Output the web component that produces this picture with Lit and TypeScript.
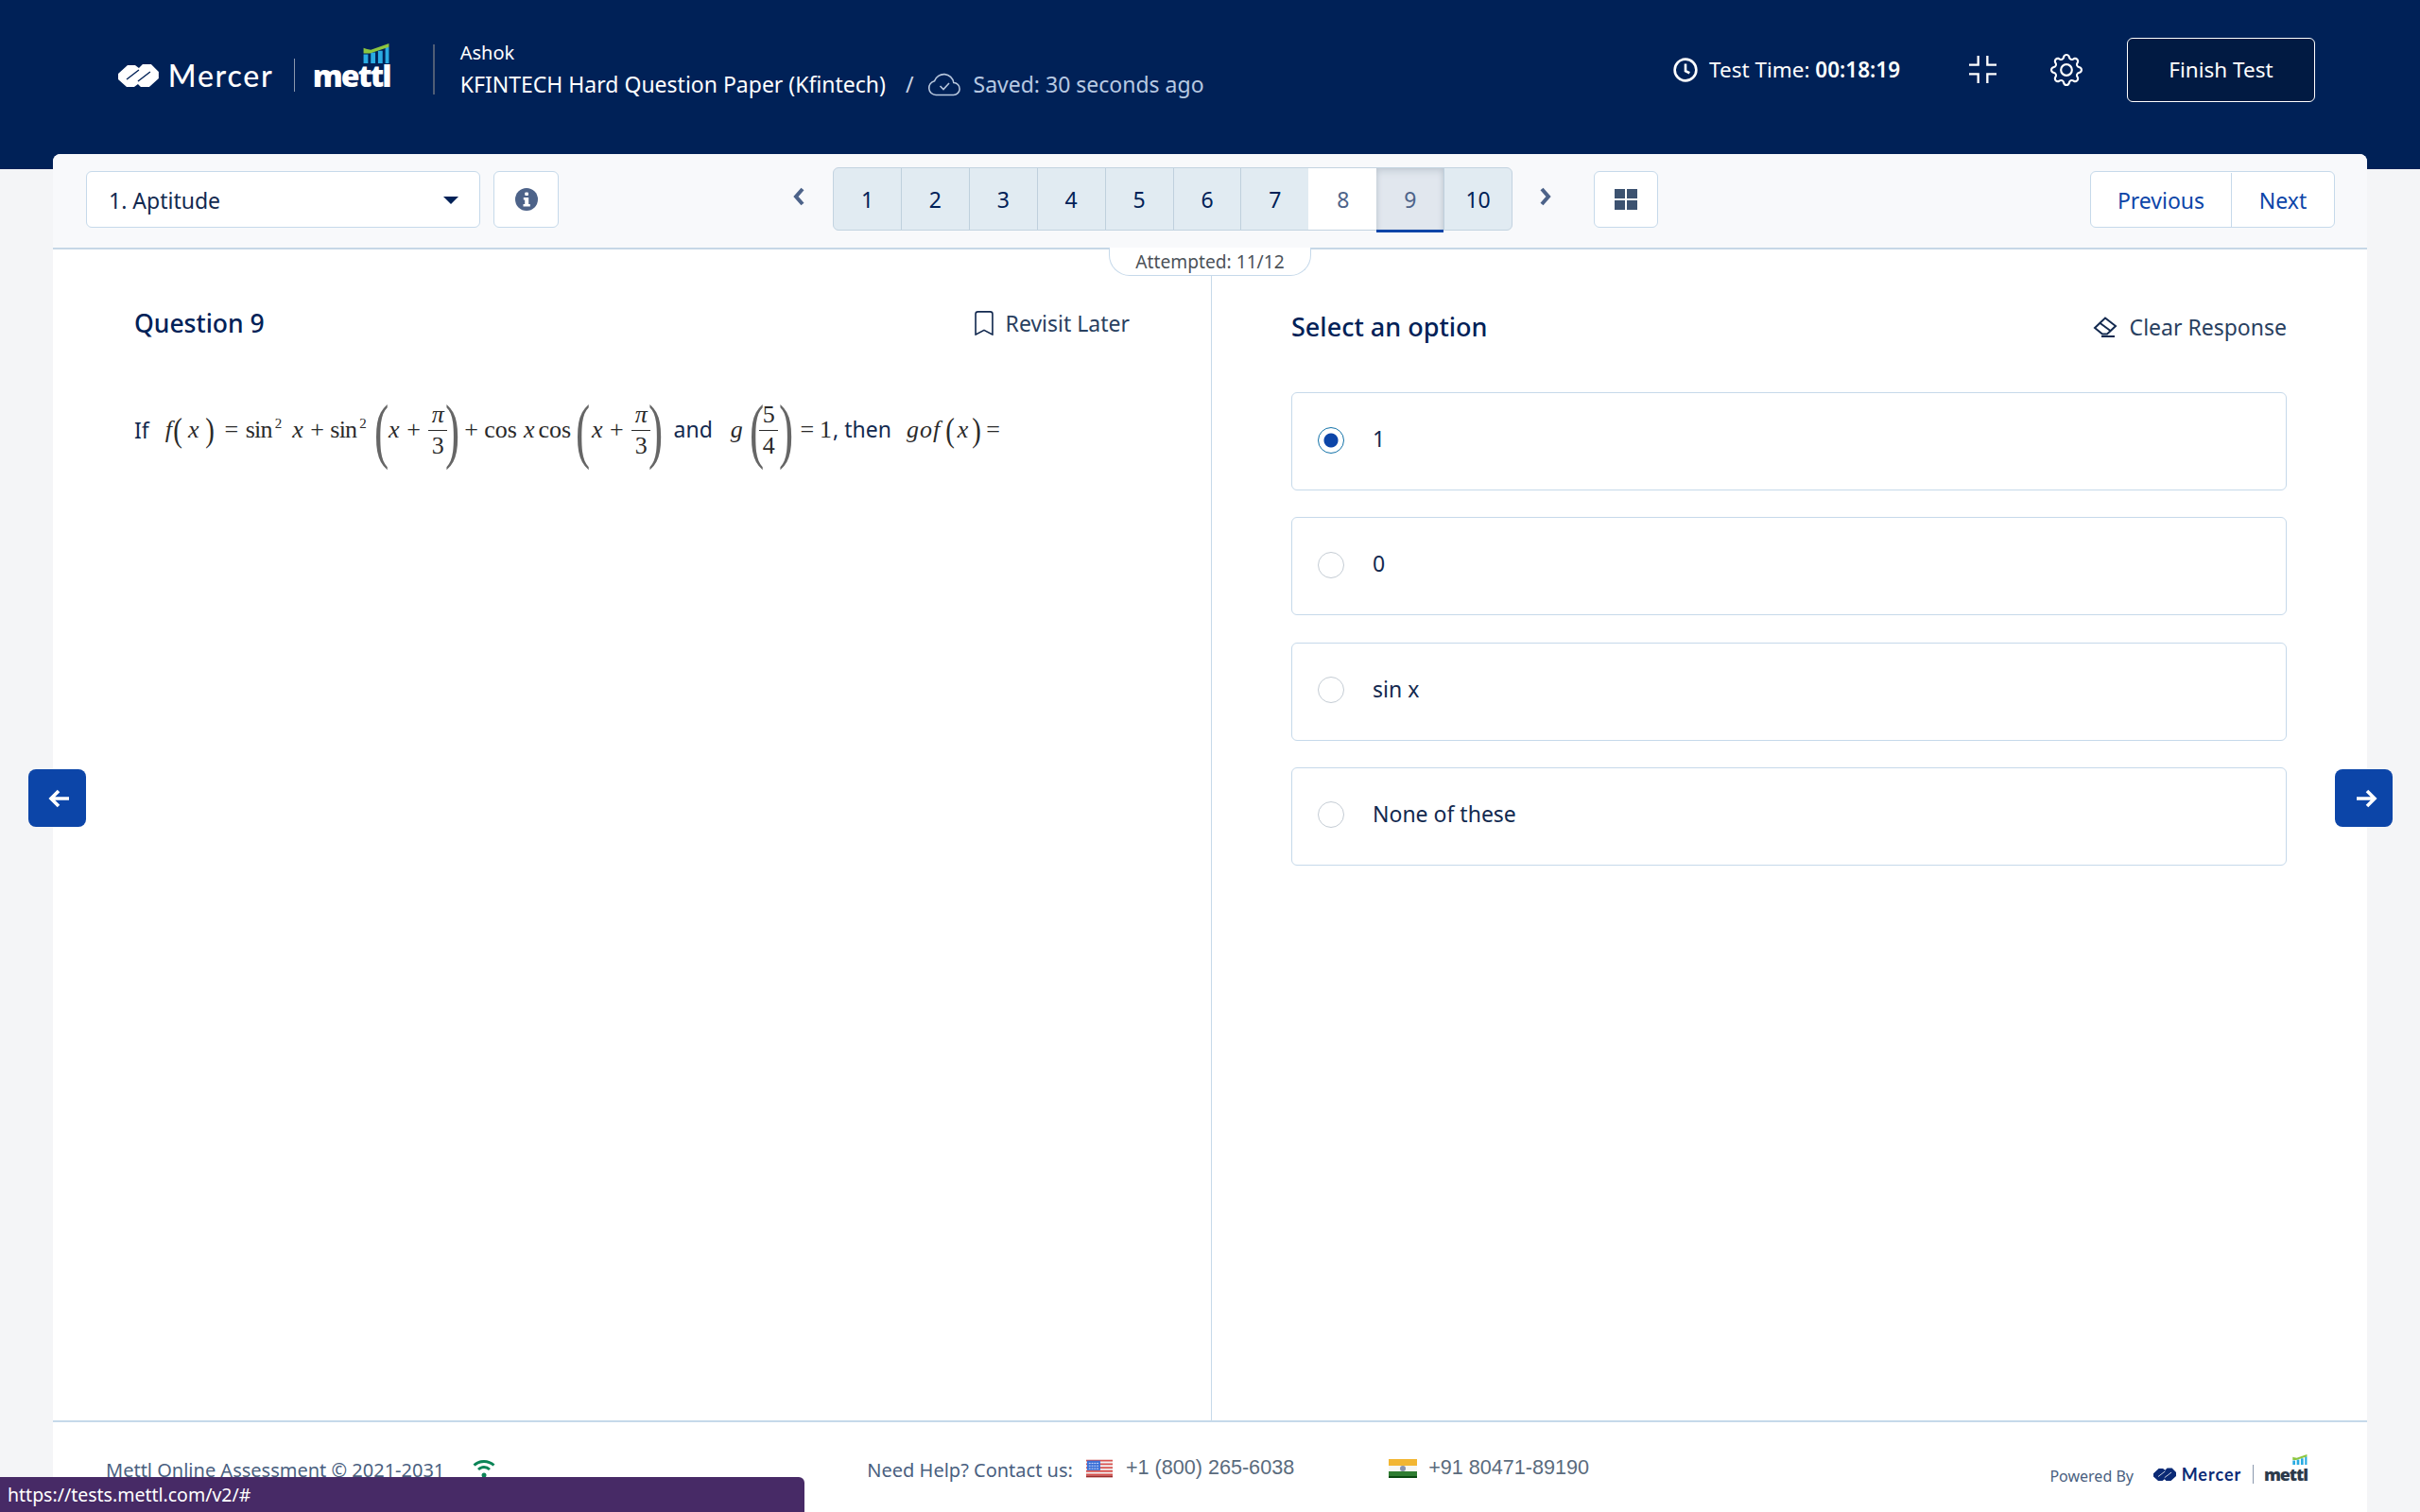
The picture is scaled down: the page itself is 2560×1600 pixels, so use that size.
import { LitElement, css, html, svg, type TemplateResult } from 'lit'
import { customElement } from 'lit/decorators.js'

const GEAR_INNER =
  'M8 4.754a3.246 3.246 0 1 0 0 6.492 3.246 3.246 0 0 0 0-6.492zM5.754 8a2.246 2.246 0 1 1 4.492 0 2.246 2.246 0 0 1-4.492 0z'
const GEAR_OUTER =
  'M9.796 1.343c-.527-1.79-3.065-1.79-3.592 0l-.094.319a.873.873 0 0 1-1.255.52l-.292-.16c-1.64-.892-3.433.902-2.54 2.541l.159.292a.873.873 0 0 1-.52 1.255l-.319.094c-1.79.527-1.79 3.065 0 3.592l.319.094a.873.873 0 0 1 .52 1.255l-.16.292c-.892 1.64.901 3.434 2.541 2.54l.292-.159a.873.873 0 0 1 1.255.52l.094.319c.527 1.79 3.065 1.79 3.592 0l.094-.319a.873.873 0 0 1 1.255-.52l.292.16c1.64.893 3.434-.902 2.54-2.541l-.159-.292a.873.873 0 0 1 .52-1.255l.319-.094c1.79-.527 1.79-3.065 0-3.592l-.319-.094a.873.873 0 0 1-.52-1.255l.16-.292c.893-1.64-.902-3.433-2.541-2.54l-.292.159a.873.873 0 0 1-1.255-.52l-.094-.319zm-2.633.283c.246-.835 1.428-.835 1.674 0l.094.319a1.873 1.873 0 0 0 2.693 1.115l.291-.16c.764-.415 1.6.42 1.184 1.185l-.159.292a1.873 1.873 0 0 0 1.116 2.692l.318.094c.835.246.835 1.428 0 1.674l-.319.094a1.873 1.873 0 0 0-1.115 2.693l.16.291c.415.764-.42 1.6-1.185 1.184l-.291-.159a1.873 1.873 0 0 0-2.693 1.116l-.094.318c-.246.835-1.428.835-1.674 0l-.094-.319a1.873 1.873 0 0 0-2.692-1.115l-.292.16c-.764.415-1.6-.42-1.184-1.185l.159-.291A1.873 1.873 0 0 0 1.945 8.93l-.319-.094c-.835-.246-.835-1.428 0-1.674l.319-.094A1.873 1.873 0 0 0 3.06 4.377l-.16-.292c-.415-.764.42-1.6 1.185-1.184l.292.159a1.873 1.873 0 0 0 2.692-1.115l.094-.319z'
const BOOKMARK =
  'M2 2a2 2 0 0 1 2-2h8a2 2 0 0 1 2 2v13.5a.5.5 0 0 1-.777.416L8 13.101l-5.223 2.815A.5.5 0 0 1 2 15.5V2zm2-1a1 1 0 0 0-1 1v12.566l4.723-2.482a.5.5 0 0 1 .554 0L13 14.566V2a1 1 0 0 0-1-1H4z'

/** Mercer | mettl lockup, sized in em so header and footer share it. */
@customElement('brand-logo')
export class BrandLogo extends LitElement {
  render(): TemplateResult {
    return html`
      <svg class="mark" viewBox="0 0 43 26" aria-hidden="true">
        <path class="mark-fill" d="M0 11 10 2h8l4 3 4-4h9l8 8v7l-10 9h-9l-3-3-4 3H9l-9-8z" />
        <path class="mark-cut" d="M9 17 22 7M21 19 34 9" />
      </svg>
      <span class="mercer">Mercer</span>
      <span class="rule"></span>
      <span class="mettl">
        <svg class="chart" viewBox="0 0 28 22" aria-hidden="true">
          <path fill="#29abe2" d="M0 12h5v10H0zM8 10h5v12H8zM16 8h5v14h-5zM24 4h4v18h-4z" />
          <path fill="#8cc63f" d="M0 5l3 1 5 1L28 0v4L7 11H0z" />
        </svg>
        <span class="mettl-text">mettl</span>
      </span>
    `
  }

  static styles = css`
    :host {
      display: inline-flex;
      align-items: center;
      color: #fff;
      font-size: 32px;
    }
    .mark {
      width: 1.34em;
      height: 0.81em;
      margin-right: 0.31em;
    }
    .mark-fill {
      fill: currentColor;
    }
    .mark-cut {
      fill: none;
      stroke: #002157;
      stroke-width: 1.4;
    }
    :host([dark]) .mark-cut {
      stroke: #fff;
    }
    .mercer {
      font-family: 'Lato', 'Open Sans', sans-serif;
      font-size: 1em;
      line-height: 1;
      font-weight: 500;
      letter-spacing: 0.055em;
    }
    .rule {
      width: 1px;
      height: 1.12em;
      margin: 0 0.6em 0 0.66em;
      background: #8a98ad;
    }
    .mettl {
      position: relative;
      display: inline-block;
    }
    .mettl-text {
      position: relative;
      font-family: 'Open Sans', sans-serif;
      font-size: 1em;
      font-weight: 800;
      line-height: 1;
      letter-spacing: -0.06em;
    }
    .chart {
      position: absolute;
      right: 0.02em;
      top: -0.36em;
      width: 0.875em;
      height: 0.66em;
    }
    :host([dark]) {
      color: #0b2a75;
    }
    :host([dark]) .mercer {
      font-weight: 700;
    }
    :host([dark]) .mettl-text {
      color: #2c3a4b;
    }
  `
}

@customElement('app-root')
export class AppRoot extends LitElement {
  private renderMath(): TemplateResult {
    const frac = (top: string, bottom: string, cls = '') => html`
      <span class="frac"><span class=${cls}>${top}</span><i class="bar"></i><span>${bottom}</span></span>
    `
    return html`
      <div class="math" aria-label="formula">
        <span class="t">If</span>
        <span class="m i f1">f</span>
        <span class="m sp">(</span>
        <span class="m i x1">x</span>
        <span class="m sp c1">)</span>
        <span class="m eq">=</span>
        <span class="m nr g1">sin</span>
        <sup class="m sq wide">2</sup>
        <span class="m i">x</span>
        <span class="m op">+</span>
        <span class="m nr">sin</span>
        <sup class="m sq narrow">2</sup>
        <span class="m lp o">(</span>
        <span class="m i">x</span>
        <span class="m op">+</span>
        ${frac('π', '3', 'i')}
        <span class="m lp c">)</span>
        <span class="m op">+</span>
        <span class="m">cos</span>
        <span class="m i g7">x</span>
        <span class="m g4">cos</span>
        <span class="m lp o">(</span>
        <span class="m i g1">x</span>
        <span class="m op">+</span>
        ${frac('π', '3', 'i')}
        <span class="m lp c">)</span>
        <span class="t and">and</span>
        <span class="m i g-l">g</span>
        <span class="m lp o of">(</span>
        ${frac('5', '4')}
        <span class="m lp c c3">)</span>
        <span class="m eq">=</span>
        <span class="m">1</span>
        <span class="t then">, then</span>
        <span class="m i gof">gof</span>
        <span class="m sp g4">(</span>
        <span class="m i g1">x</span>
        <span class="m sp c2">)</span>
        <span class="m eq last">=</span>
      </div>
    `
  }

  private renderPager(): TemplateResult {
    const pages = [1, 2, 3, 4, 5, 6, 7, 8, 9, 10]
    return html`
      <div class="pager">
        ${pages.map(
          (n) => html`<span class="page ${n === 8 ? 'open' : ''} ${n === 9 ? 'current' : ''}">${n}</span>`,
        )}
      </div>
    `
  }

  render(): TemplateResult {
    const options = ['1', '0', 'sin x', 'None of these']
    return html`
      <header class="top">
        <brand-logo class="head-logo"></brand-logo>
        <span class="head-rule"></span>
        <div class="title">
          <div class="user">Ashok</div>
          <div class="paper">
            <span>KFINTECH Hard Question Paper (Kfintech)</span>
            <span class="slash">/</span>
            <svg class="cloud" viewBox="0 0 36 26" fill="none" stroke="#b7c7dd" stroke-width="1.6">
              <path d="M9 24.500a7.500 7.500 0 0 1-1.500-14.800 10.500 10.500 0 0 1 20.300 1.800A6.500 6.500 0 0 1 27.500 24.500z" />
              <path d="m13.500 15 3.500 3.500 6-6.500" />
            </svg>
            <span class="saved">Saved: 30 seconds ago</span>
          </div>
        </div>
        <div class="timer">
          <svg class="clock" viewBox="0 0 24 24" fill="none" stroke="#fff" stroke-width="2.400">
            <circle cx="12" cy="12" r="10.500" />
            <path d="M12 6v7l4 2" />
          </svg>
          <span>Test Time: <b>00:18:19</b></span>
        </div>
        <svg class="compress" viewBox="0 0 30 30" fill="none" stroke="#fff" stroke-width="2.400">
          <path d="M10 0v10H0M20 0v10h10M0 20h10v10M30 20H20v10" />
        </svg>
        <svg class="gear" viewBox="0 0 16 16" fill="#fff">
          <path d=${GEAR_INNER} />
          <path d=${GEAR_OUTER} />
        </svg>
        <button class="finish">Finish Test</button>
      </header>

      <section class="card">
        <div class="toolbar">
          <div class="select">
            <span>1. Aptitude</span>
            <i class="caret"></i>
          </div>
          <div class="tool info">
            <svg viewBox="0 0 24 24">
              <circle cx="12" cy="12" r="12" fill="#4d6389" />
              <rect x="10.200" y="4.500" width="3.800" height="3.600" rx="1" fill="#fff" />
              <path fill="#fff" d="M8.800 10h5.400v7h1.600v2.500H8.500V17h1.700v-4.500H8.800z" />
            </svg>
          </div>
          <svg class="chev prev" viewBox="0 0 14 20">
            <path d="M11 2 4 10l7 8" fill="none" stroke="#4d6389" stroke-width="4" />
          </svg>
          ${this.renderPager()}
          <svg class="chev next" viewBox="0 0 14 20">
            <path d="m3 2 7 8-7 8" fill="none" stroke="#4d6389" stroke-width="4" />
          </svg>
          <div class="tool grid-btn">
            <svg viewBox="0 0 24 22" fill="#3c5270">
              <rect width="11" height="10" />
              <rect x="13" width="11" height="10" />
              <rect y="12" width="11" height="10" />
              <rect x="13" y="12" width="11" height="10" />
            </svg>
          </div>
          <div class="prev-next">
            <span>Previous</span>
            <span>Next</span>
          </div>
          <div class="attempted">Attempted: 11/12</div>
        </div>

        <div class="main">
          <div class="question">
            <div class="row">
              <h2>Question 9</h2>
              <span class="act">
                <svg class="bookmark" viewBox="0 0 16 16" fill="#12294f"><path d=${BOOKMARK} /></svg>
                Revisit Later
              </span>
            </div>
            ${this.renderMath()}
          </div>
          <div class="answers">
            <div class="row">
              <h2 class="pick">Select an option</h2>
              <span class="act clear">
                <svg class="eraser" viewBox="0 0 26 22" fill="none" stroke="#12294f" stroke-width="2">
                  <path d="M13 1.500 24 10 15 18.500H10L2 12z" />
                  <path d="M7 6.500 18.500 15" />
                  <path d="M9 21h14" />
                </svg>
                Clear Response
              </span>
            </div>
            <div class="options">
              ${options.map(
                (o, i) => html`
                  <div class="option">
                    <span class="radio ${i === 0 ? 'on' : ''}"></span>
                    <span class="label">${o}</span>
                  </div>
                `,
              )}
            </div>
          </div>
        </div>

        <footer class="foot">
          <span class="copy">Mettl Online Assessment © 2021-2031</span>
          <svg class="wifi" viewBox="0 0 24 20" fill="none" stroke="#0b8457" stroke-width="3">
            <path d="M1.500 6.500C7.500 1 16.500 1 22.500 6.500M6 11c3.600-3.200 8.400-3.200 12 0" />
            <circle cx="12" cy="17" r="2.500" fill="#0b8457" stroke="none" />
          </svg>
          <span class="help">Need Help? Contact us:</span>
          ${this.flagUs()}
          <span class="phone">+1 (800) 265-6038</span>
          ${this.flagIn()}
          <span class="phone">+91 80471-89190</span>
          <span class="powered">Powered By</span>
          <brand-logo class="foot-logo" dark></brand-logo>
        </footer>
      </section>

      <button class="side left" aria-label="Previous question">
        <svg viewBox="0 0 24 24" fill="none" stroke="#fff" stroke-width="3.600">
          <path d="M22 12H4M11 4l-8 8 8 8" />
        </svg>
      </button>
      <button class="side right" aria-label="Next question">
        <svg viewBox="0 0 24 24" fill="none" stroke="#fff" stroke-width="3.600">
          <path d="M2 12h18M13 4l8 8-8 8" />
        </svg>
      </button>
      <div class="status">https://tests.mettl.com/v2/#</div>
    `
  }

  private flagUs() {
    return html`<svg class="flag" viewBox="0 0 30 20">
      ${svg`
        <rect width="30" height="20" fill="#f2f2f2" />
        <path d="M0 1h30M0 5h30M0 9h30M0 13h30M0 17h30" stroke="#d9534f" stroke-width="2" />
        <rect x="1" y="1" width="15" height="11" fill="#3b6fd6" />
        <path d="M3 4h11M3 7h11M3 10h11" stroke="#dfe8ff" stroke-width="1" stroke-dasharray="2 1" />
        <rect y="18" width="30" height="2" fill="#9c2b2b" />
      `}
    </svg>`
  }

  private flagIn() {
    return html`<svg class="flag flag-in" viewBox="0 0 30 20">
      ${svg`
        <rect width="30" height="7" fill="#f2b632" />
        <rect y="7" width="30" height="6" fill="#f7f7f2" />
        <rect y="13" width="30" height="7" fill="#2f7d32" />
        <rect y="18" width="30" height="2" fill="#0b4a12" />
        <circle cx="15" cy="10" r="3" fill="#8a94ad" />
      `}
    </svg>`
  }

  static styles = css`
    :host {
      display: flex;
      flex-direction: column;
      position: relative;
      width: 2560px;
      height: 1600px;
      overflow: hidden;
      background: #f4f5f7;
      color: #12294f;
      font-family: 'Noto Sans', sans-serif;
      font-size: 23px;
    }
    .top {
      flex: none;
      display: flex;
      align-items: center;
      box-sizing: border-box;
      height: 179px;
      padding: 0 111px 32px 125px;
      background: #002157;
      color: #fff;
    }
    .head-logo {
      margin-top: 12px;
    }
    .head-rule {
      width: 2px;
      height: 53px;
      margin: 0 27px 0 45px;
      background: #4f5d75;
    }
    .user {
      margin-top: 3px;
      font-size: 20px;
      line-height: 28px;
    }
    .paper {
      display: flex;
      align-items: center;
      line-height: 38px;
    }
    .slash {
      margin: 0 14px 0 21px;
      color: #c9d4e4;
    }
    .cloud {
      width: 36px;
      height: 26px;
      margin-right: 13px;
    }
    .saved {
      color: #b7c9e2;
    }
    .timer {
      display: flex;
      align-items: center;
      margin-left: auto;
      gap: 12px;
      font-size: 22.500px;
    }
    .timer b {
      font-weight: 600;
    }
    .clock {
      width: 26px;
      height: 26px;
    }
    .compress {
      width: 29px;
      height: 29px;
      margin-left: 73px;
    }
    .gear {
      width: 34px;
      height: 34px;
      margin-left: 57px;
    }
    .finish {
      width: 199px;
      height: 68px;
      margin-left: 47px;
      border: 1px solid #fff;
      border-radius: 6px;
      background: #011a42;
      color: #fff;
      font: inherit;
      font-size: 22.500px;
    }
    .card {
      flex: 1;
      min-height: 0;
      display: flex;
      flex-direction: column;
      margin: -16px 56px 0;
      border-radius: 8px 8px 0 0;
      background: #fff;
    }
    .toolbar {
      position: relative;
      flex: none;
      display: flex;
      align-items: center;
      box-sizing: border-box;
      height: 101px;
      padding: 0 34px 3px 35px;
      border-bottom: 2px solid #c6d7e6;
      border-radius: 8px 8px 0 0;
      background: #f8f9fb;
    }
    .select {
      box-sizing: border-box;
      width: 417px;
      height: 60px;
      display: flex;
      align-items: center;
      justify-content: space-between;
      padding: 2px 22px 0 23px;
      border: 1px solid #c6d9ea;
      border-radius: 6px;
      background: #fff;
    }
    .caret {
      width: 0;
      height: 0;
      border-left: 8px solid transparent;
      border-right: 8px solid transparent;
      border-top: 8px solid #002157;
    }
    .tool {
      box-sizing: border-box;
      display: flex;
      align-items: center;
      justify-content: center;
      height: 60px;
      border: 1px solid #c6d9ea;
      border-radius: 6px;
      background: #fff;
    }
    .info {
      width: 69px;
      margin-left: 14px;
    }
    .info svg {
      width: 24px;
      height: 24px;
    }
    .chev {
      width: 14px;
      height: 20px;
      margin-bottom: 6px;
    }
    .prev {
      margin-left: 247px;
      margin-right: 29px;
    }
    .next {
      margin-left: 28px;
    }
    .grid-btn {
      width: 68px;
      margin-left: 44px;
    }
    .grid-btn svg {
      width: 24px;
      height: 22px;
    }
    .pager {
      display: flex;
      box-sizing: border-box;
      width: 719px;
      height: 67px;
      margin-bottom: 1px;
      border: 1px solid #c3d3e0;
      border-radius: 6px;
      background: #e1ebf2;
    }
    .page {
      position: relative;
      flex: 1;
      display: flex;
      align-items: center;
      justify-content: center;
      border-left: 1px solid #bfd0dd;
      color: #002157;
    }
    .page:first-child {
      border-left: 0;
    }
    .page.open {
      background: #fff;
      color: #4d6389;
      border-left-color: #fff;
    }
    .page.current {
      background: #e1e7ee;
      color: #4d6389;
      border-left: 0;
      box-shadow: inset 0 6px 8px -4px #bcc5cf, inset 5px 0 6px -5px #bcc5cf, inset -5px 0 6px -5px #bcc5cf;
    }
    .page.current::after {
      content: '';
      position: absolute;
      left: 0;
      right: 0;
      bottom: -3px;
      height: 3px;
      background: #0c45a8;
    }
    .prev-next {
      box-sizing: border-box;
      display: flex;
      height: 60px;
      width: 259px;
      margin-left: auto;
      padding-top: 1px;
      border: 1px solid #c6d9ea;
      border-radius: 6px;
      background: #fff;
      color: #0c45a8;
    }
    .prev-next span {
      display: flex;
      align-items: center;
      justify-content: center;
    }
    .prev-next span:first-child {
      width: 148px;
      border-right: 1px solid #c6d9ea;
    }
    .prev-next span:last-child {
      flex: 1;
    }
    .attempted {
      position: absolute;
      z-index: 1;
      left: 1117px;
      top: 99px;
      box-sizing: border-box;
      width: 214px;
      height: 30px;
      display: flex;
      align-items: center;
      justify-content: center;
      border: 1px solid #c6d9ea;
      border-top: 0;
      border-radius: 0 0 22px 22px;
      background: #fff;
      color: #4c5259;
      font-size: 19.200px;
    }
    .main {
      flex: 1;
      min-height: 0;
      display: flex;
    }
    .question {
      box-sizing: border-box;
      width: 1226px;
      padding: 60px 86px 0;
      border-right: 1px solid #c6d9ea;
    }
    .answers {
      flex: 1;
      padding: 63px 85px 0 84px;
    }
    .row {
      display: flex;
      align-items: center;
      justify-content: space-between;
      height: 36px;
    }
    h2 {
      margin: 0;
      font-size: 26.500px;
      font-weight: 500;
      color: #002157;
    }
    .pick {
      font-size: 27px;
    }
    .act {
      display: flex;
      align-items: center;
      gap: 13px;
      color: #29405f;
    }
    .clear {
      margin-top: 2px;
    }
    .bookmark {
      width: 26px;
      height: 26px;
      margin-right: -3px;
    }
    .eraser {
      width: 26px;
      height: 22px;
    }
    .math {
      display: flex;
      align-items: center;
      height: 72px;
      margin-top: 59px;
      color: #2a2a2a;
      font-family: 'Liberation Serif', serif;
      font-size: 26px;
      white-space: nowrap;
    }
    .t {
      font-family: 'Noto Sans', sans-serif;
      font-size: 23px;
      color: #12294f;
    }
    .m {
      line-height: 1;
    }
    .i {
      font-style: italic;
    }
    .nr {
      letter-spacing: -0.800px;
    }
    .f1 {
      margin-left: 17px;
    }
    .x1 {
      margin-left: 5px;
    }
    .c1 {
      margin-left: 5px;
    }
    .c2 {
      margin-left: 3px;
    }
    .sp {
      font-size: 36px;
      font-weight: 400;
      transform: scaleX(0.8);
    }
    .eq {
      margin: 0 6px 0 10px;
    }
    .eq.last {
      margin-left: 4px;
    }
    .sq {
      margin: -14px 8px 0 3px;
      font-size: 15px;
    }
    .sq.wide {
      margin-right: 11px;
    }
    .sq.narrow {
      margin-right: 3px;
    }
    .op {
      margin: 0 6.500px 0 7.500px;
    }
    .lp {
      font-size: 76px;
      line-height: 72px;
      color: #666;
      transform: scaleX(0.6);
    }
    .lp.o {
      margin-right: -5px;
    }
    .lp.o.of {
      margin: 0 -12px 0 2px;
    }
    .lp.c {
      margin: 0 -8px 0 -7px;
    }
    .lp.c.c3 {
      margin-left: -4px;
    }
    .frac {
      display: inline-flex;
      flex-direction: column;
      align-items: center;
      width: 20px;
      margin-left: 2px;
      line-height: 28px;
    }
    .bar {
      width: 20px;
      height: 1px;
      margin: 2px 0;
      background: #2a2a2a;
    }
    .g1 {
      margin-left: 1.500px;
    }
    .g4 {
      margin-left: 4px;
    }
    .g7 {
      margin-left: 7px;
    }
    .and {
      margin-left: 14px;
      margin-bottom: 2px;
    }
    .g-l {
      margin-left: 19px;
    }
    .then {
      margin-left: 1px;
      margin-bottom: 2px;
    }
    .gof {
      margin-left: 16px;
      letter-spacing: 1px;
    }
    .options {
      display: flex;
      flex-direction: column;
      gap: 28.300px;
      margin-top: 52px;
    }
    .option {
      box-sizing: border-box;
      height: 104px;
      display: flex;
      align-items: center;
      gap: 30px;
      padding: 0 0 3px 27px;
      border: 1px solid #c6d9ea;
      border-radius: 6px;
    }
    .label {
      margin-bottom: 3px;
    }
    .radio {
      box-sizing: border-box;
      flex: none;
      width: 28px;
      height: 28px;
      border: 1px solid #c4ccd4;
      border-radius: 50%;
    }
    .radio.on {
      border: 1.500px solid #1272a8;
      background: radial-gradient(circle, #0c45a8 0 7px, #fff 8px);
    }
    .foot {
      flex: none;
      display: flex;
      align-items: flex-start;
      box-sizing: border-box;
      height: 97px;
      padding: 36px 63px 0 56px;
      border-top: 2px solid #c6d9ea;
      background: #fff;
      font-size: 20px;
      line-height: 30px;
      color: #4a5f80;
    }
    .wifi {
      width: 24px;
      height: 20px;
      margin: 3px 0 0 30px;
    }
    .help {
      margin-left: 393px;
    }
    .flag {
      width: 28px;
      height: 20px;
      margin: 3px 0 0 14px;
    }
    .flag-in {
      width: 30px;
      margin: 3px -2px 0 100px;
    }
    .phone {
      margin: -3px 0 0 14px;
      font-family: 'Liberation Sans', sans-serif;
      font-size: 21.600px;
      color: #5a6b7d;
    }
    .powered {
      margin: 9px 0 0 auto;
      font-size: 16px;
      line-height: 24px;
    }
    .foot-logo {
      margin: 4px 0 0 21px;
      font-size: 18px;
    }
    .side {
      position: absolute;
      top: 814px;
      width: 61px;
      height: 61px;
      display: flex;
      align-items: center;
      justify-content: center;
      padding: 0 0 0 4px;
      border: 0;
      border-radius: 8px;
      background: #0c45a8;
    }
    .side.left {
      left: 30px;
    }
    .side.right {
      left: 2470px;
    }
    .side svg {
      width: 24px;
      height: 24px;
    }
    .status {
      position: absolute;
      left: 0;
      bottom: 0;
      box-sizing: border-box;
      width: 851px;
      height: 37px;
      padding-left: 8px;
      border-radius: 0 6px 0 0;
      background: #472a66;
      color: #fff;
      font-size: 19.500px;
      line-height: 38px;
    }
  `
}
